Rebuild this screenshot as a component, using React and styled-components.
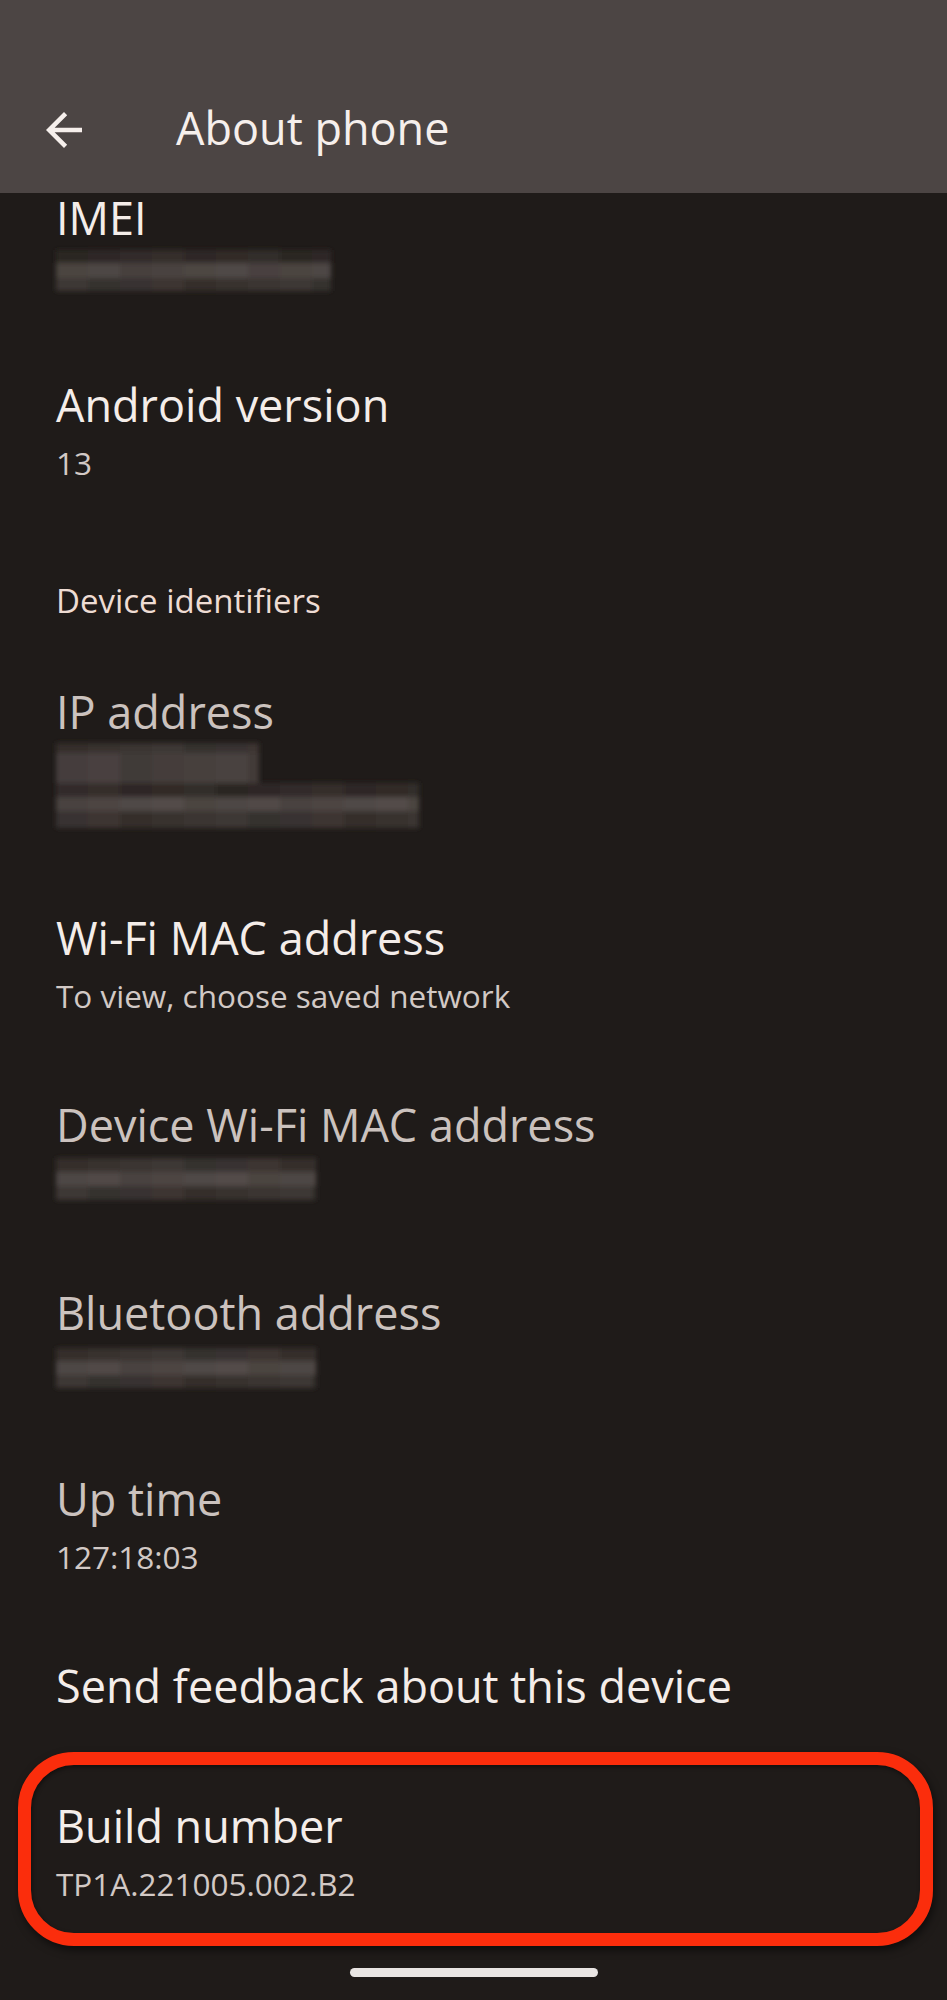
import React from "react";
import styled, { createGlobalStyle } from "styled-components";

const GlobalStyle = createGlobalStyle`
  html, body { margin: 0; padding: 0; background: #1f1b19; }
  body { font-family: "Open Sans", "Noto Sans", sans-serif; -webkit-font-smoothing: antialiased; }
`;

const Screen = styled.div`
  width: 947px;
  min-height: 2000px;
  background: #1f1b19;
  display: flex;
  flex-direction: column;
  overflow: hidden;
`;

const AppBar = styled.header`
  height: 193px;
  box-sizing: border-box;
  background: #4c4544;
  display: flex;
  align-items: flex-end;
  padding: 0 0 38px 37px;
  gap: 85px;
`;

const BackButton = styled.button`
  width: 54px;
  height: 54px;
  padding: 0;
  margin-bottom: -2px;
  border: 0;
  background: transparent;
  display: flex;
  align-items: center;
  justify-content: center;
  color: #f6efec;
`;

const BarTitle = styled.h1`
  margin: 0;
  font-size: 45px;
  line-height: 54px;
  font-weight: 400;
  color: #f6efec;
`;

const List = styled.main`
  display: flex;
  flex-direction: column;
  margin-top: -43px;
`;

const Row = styled.div`
  position: relative;
  padding: 41px 56px;
  display: flex;
  flex-direction: column;
`;

const HighlightRow = styled(Row)`
  margin-top: 4px;
`;

const Title = styled.div`
  font-size: 45px;
  line-height: 54px;
  color: ${(p) => (p.$dim ? "#cbc2be" : "#f4ede9")};
`;

const Summary = styled.div`
  margin-top: 11px;
  font-size: 31.5px;
  line-height: 40px;
  color: #d2c9c5;
`;

const Category = styled.div`
  padding: 57px 56px 23px;
  font-size: 33px;
  line-height: 40px;
  font-weight: 500;
  color: #eedcd3;
`;

const RedactBox = styled.div`
  margin: ${(p) => p.$mt}px 0 ${(p) => p.$mb}px -8px;
  display: flex;
  line-height: 0;
`;

const Highlight = styled.div`
  position: absolute;
  left: 18px;
  right: 14px;
  top: -6px;
  bottom: -1px;
  border: 13px solid #fb2d0c;
  border-radius: 56px;
  box-shadow: 2px 4px 8px rgba(0, 0, 0, 0.55), inset 1px 2px 4px rgba(0, 0, 0, 0.45);
  pointer-events: none;
`;

const HomeBar = styled.div`
  align-self: center;
  width: 248px;
  height: 9px;
  border-radius: 5px;
  background: #e9e5e3;
  margin-top: 23px;
`;

const shade = (t) => {
  const a = [40, 34, 32];
  const b = [100, 92, 89];
  const c = a.map((v, i) => Math.round(v + (b[i] - v) * t));
  return `rgb(${c[0]},${c[1]},${c[2]})`;
};

function Redacted({ blocks, mt, mb }) {
  const pad = 8;
  const cell = 32;
  const maxW = Math.max(...blocks.map((b) => b.w));
  let y = pad;
  const rects = [];
  blocks.forEach((blk, bi) => {
    blk.bands.forEach((band, ri) => {
      const cols = Math.ceil(blk.w / cell);
      for (let c = 0; c < cols; c++) {
        const w = Math.min(cell, blk.w - c * cell);
        const jitter = ((c * 37 + ri * 17 + bi * 11) % 7) / 7 - 0.5;
        rects.push(
          <rect
            key={`${bi}-${ri}-${c}`}
            x={pad + c * cell}
            y={y}
            width={w}
            height={band.h}
            fill={shade(Math.max(0, Math.min(1, band.t + jitter * 0.18)))}
          />
        );
      }
      y += band.h;
    });
  });
  const totalH = y + pad;
  const id = `blur${blocks[0].w}${totalH}`;
  return (
    <RedactBox $mt={mt - pad} $mb={mb - pad}>
      <svg width={maxW + pad * 2} height={totalH} viewBox={`0 0 ${maxW + pad * 2} ${totalH}`}>
        <defs>
          <filter id={id} x="-5%" y="-30%" width="110%" height="160%">
            <feGaussianBlur stdDeviation="2.4" />
          </filter>
        </defs>
        <g filter={`url(#${id})`}>{rects}</g>
      </svg>
    </RedactBox>
  );
}

const ArrowBack = () => (
  <svg width="54" height="54" viewBox="0 0 24 24" fill="currentColor" aria-hidden="true">
    <path d="M20 11H7.83l5.59-5.59L12 4l-8 8 8 8 1.41-1.41L7.83 13H20v-2z" />
  </svg>
);

const imei = [{ w: 275, bands: [{ h: 13, t: 0.15 }, { h: 15, t: 0.6 }, { h: 13, t: 0.3 }] }];
const ip = [
  { w: 203, bands: [{ h: 10, t: 0.3 }, { h: 30, t: 0.5 }] },
  { w: 363, bands: [{ h: 14, t: 0.15 }, { h: 14, t: 0.65 }, { h: 17, t: 0.3 }] },
];
const mac = [{ w: 260, bands: [{ h: 14, t: 0.3 }, { h: 14, t: 0.65 }, { h: 14, t: 0.3 }] }];
const bt = [{ w: 260, bands: [{ h: 13, t: 0.3 }, { h: 14, t: 0.65 }, { h: 13, t: 0.3 }] }];

export default function App() {
  return (
    <>
      <GlobalStyle />
      <Screen>
        <AppBar>
          <BackButton aria-label="Back">
            <ArrowBack />
          </BackButton>
          <BarTitle>About phone</BarTitle>
        </AppBar>
        <List>
          <Row>
            <Title>IMEI</Title>
            <Redacted blocks={imei} mt={5} mb={5} />
          </Row>
          <Row>
            <Title>Android version</Title>
            <Summary>13</Summary>
          </Row>
          <Category>Device identifiers</Category>
          <Row>
            <Title $dim>IP address</Title>
            <Redacted blocks={ip} mt={4} mb={1} />
          </Row>
          <Row>
            <Title>Wi-Fi MAC address</Title>
            <Summary>To view, choose saved network</Summary>
          </Row>
          <Row>
            <Title $dim>Device Wi-Fi MAC address</Title>
            <Redacted blocks={mac} mt={6} mb={4} />
          </Row>
          <Row>
            <Title $dim>Bluetooth address</Title>
            <Redacted blocks={bt} mt={8} mb={2} />
          </Row>
          <Row>
            <Title $dim>Up time</Title>
            <Summary>127:18:03</Summary>
          </Row>
          <Row>
            <Title>Send feedback about this device</Title>
          </Row>
          <HighlightRow>
            <Highlight />
            <Title>Build number</Title>
            <Summary>TP1A.221005.002.B2</Summary>
          </HighlightRow>
          <HomeBar />
        </List>
      </Screen>
    </>
  );
}
